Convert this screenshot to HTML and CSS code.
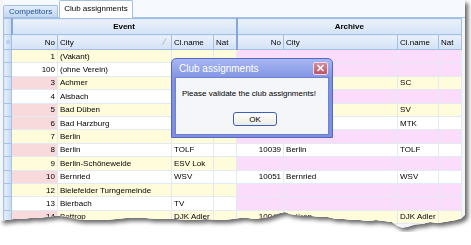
FILE: index.html
```html
<!DOCTYPE html>
<html>
  <head>
    <meta charset="utf-8">
    <title>Club assignments</title>
    <link rel="stylesheet" href="styles.css">
  </head>
  <body>
    <div class="shot">
      <div class="paper">
        <div class="tabs">
          <div class="tab">Competitors</div>
          <div class="tab active">Club assignments</div>
        </div>
        <table class="grid">
          <colgroup>
            <col class="c-ind"><col class="c-no"><col class="c-city"><col class="c-cl"><col class="c-nat">
            <col class="c-no2"><col class="c-city"><col class="c-cl2"><col class="c-nat">
          </colgroup>
          <thead>
            <tr class="band">
              <th class="ind"></th>
              <th colspan="4" class="group">Event</th>
              <th colspan="4" class="group">Archive</th>
            </tr>
            <tr class="cols">
              <th class="ind"><span class="dot"></span></th>
              <th class="num">No</th>
              <th class="sorted">City
                <svg class="sort" width="6" height="8" viewBox="0 0 6 8"><path d="M5 0.5 L1 7.5" stroke="#b4b8c4" fill="none"/><path d="M1 7.5 H5.5" stroke="#e2e6ee" fill="none"/></svg>
              </th>
              <th>Cl.name</th>
              <th class="split">Nat</th>
              <th class="num">No</th>
              <th>City</th>
              <th>Cl.name</th>
              <th>Nat</th>
            </tr>
          </thead>
          <tbody>
            <tr class="odd">
              <td class="ind"></td><td class="num">1</td><td>(Vakant)</td><td></td><td class="split"></td>
              <td class="miss"></td><td class="miss"></td><td class="miss"></td><td class="miss"></td>
            </tr>
            <tr>
              <td class="ind"></td><td class="num">100</td><td>(ohne Verein)</td><td></td><td class="split"></td>
              <td class="miss"></td><td class="miss"></td><td class="miss"></td><td class="miss"></td>
            </tr>
            <tr class="odd">
              <td class="ind"></td><td class="num hit">3</td><td>Achmer</td><td></td><td class="split"></td>
              <td class="num">10003</td><td>Achmer</td><td>SC</td><td></td>
            </tr>
            <tr>
              <td class="ind"></td><td class="num">4</td><td>Alsbach</td><td></td><td class="split"></td>
              <td class="miss"></td><td class="miss"></td><td class="miss"></td><td class="miss"></td>
            </tr>
            <tr class="odd">
              <td class="ind"></td><td class="num hit">5</td><td>Bad Düben</td><td></td><td class="split"></td>
              <td class="num">10005</td><td>Bad Düben</td><td>SV</td><td></td>
            </tr>
            <tr>
              <td class="ind"></td><td class="num hit">6</td><td>Bad Harzburg</td><td></td><td class="split"></td>
              <td class="num">10006</td><td>Harzburg</td><td>MTK</td><td></td>
            </tr>
            <tr class="odd">
              <td class="ind"></td><td class="num">7</td><td>Berlin</td><td></td><td class="split"></td>
              <td class="miss"></td><td class="miss"></td><td class="miss"></td><td class="miss"></td>
            </tr>
            <tr>
              <td class="ind"></td><td class="num hit">8</td><td>Berlin</td><td>TOLF</td><td class="split"></td>
              <td class="num">10039</td><td>Berlin</td><td>TOLF</td><td></td>
            </tr>
            <tr class="odd">
              <td class="ind"></td><td class="num">9</td><td>Berlin-Schöneweide</td><td>ESV Lok</td><td class="split"></td>
              <td class="miss"></td><td class="miss"></td><td class="miss"></td><td class="miss"></td>
            </tr>
            <tr>
              <td class="ind"></td><td class="num hit">10</td><td>Bernried</td><td>WSV</td><td class="split"></td>
              <td class="num">10051</td><td>Bernried</td><td>WSV</td><td></td>
            </tr>
            <tr class="odd">
              <td class="ind"></td><td class="num">12</td><td>Bielefelder Turngemeinde</td><td></td><td class="split"></td>
              <td class="miss"></td><td class="miss"></td><td class="miss"></td><td class="miss"></td>
            </tr>
            <tr>
              <td class="ind"></td><td class="num">13</td><td>Bierbach</td><td>TV</td><td class="split"></td>
              <td class="miss"></td><td class="miss"></td><td class="miss"></td><td class="miss"></td>
            </tr>
            <tr class="odd">
              <td class="ind"></td><td class="num hit">14</td><td>Bottrop</td><td>DJK Adler</td><td class="split"></td>
              <td class="num">10044</td><td>Bottrop</td><td>DJK Adler</td><td></td>
            </tr>
          </tbody>
        </table>
      </div>
    </div>

    <div class="dialog">
      <div class="dialog-title">
        <span>Club assignments</span>
        <span class="close">
          <svg width="9" height="8" viewBox="0 0 9 8"><path d="M1.5 1 L7.5 7 M7.5 1 L1.5 7" stroke="#fff" stroke-width="1.6"/></svg>
        </span>
      </div>
      <div class="dialog-body">
        <p>Please validate the club assignments!</p>
        <button class="ok">OK</button>
      </div>
    </div>
  </body>
</html>
```

FILE: styles.css
```css
* {
  margin: 0;
  box-sizing: border-box;
}

html,
body {
  background: #fff;
  font-family: "Liberation Sans", Arial, sans-serif;
  font-size: 8px;
  color: #000;
}

.shot {
  width: 465px;
  filter: drop-shadow(3px 3px 2px rgba(0, 0, 0, 0.6));
}

.paper {
  height: 232px;
  padding-left: 3px;
  background: #f3f5f8;
  clip-path: polygon(0 0, 465px 0, 465px 215px, 462px 218px, 456px 220px, 450px 221px, 444px 222px, 438px 223px,
    430px 222px, 422px 224px, 414px 225px, 408px 227px, 402px 228px, 397px 226px, 392px 222px, 384px 221px,
    376px 220px, 368px 221px, 360px 220px, 352px 220px, 344px 219px, 336px 219px, 328px 217px, 320px 217px,
    312px 216px, 304px 216px, 296px 215px, 290px 214px, 285px 212px, 280px 213px, 274px 215px, 268px 217px,
    262px 218px, 255px 219px, 248px 218px, 240px 218px, 232px 219px, 224px 220px, 216px 220px, 206px 219px,
    196px 220px, 186px 220px, 176px 219px, 166px 219px, 156px 219px, 146px 218px, 136px 218px, 126px 218px,
    116px 219px, 106px 220px, 96px 220px, 86px 220px, 76px 219px, 68px 217px, 60px 216px, 54px 216px,
    46px 217px, 38px 218px, 30px 218px, 22px 219px, 14px 219px, 6px 220px, 0 221px);
}

/* tabs */
.tabs {
  display: flex;
  align-items: flex-end;
  gap: 1px;
  height: 18px;
  border-bottom: 1px solid #a4bfe2;
  background: #f6f9fd;
}

.tab {
  height: 12px;
  padding: 0 5px;
  line-height: 11px;
  color: #1d4f9a;
  background: linear-gradient(#e4eefa, #c3d7f0);
  border: 1px solid #a4bfe2;
  border-bottom: none;
  border-radius: 2px 2px 0 0;
}

.tab.active {
  height: 18px;
  margin-bottom: -1px;
  padding: 0 4px;
  line-height: 15px;
  color: #000;
  background: #fff;
}

/* grid */
.grid {
  width: 459px;
  border-collapse: collapse;
  table-layout: fixed;
  background: #fff;
}

.c-ind { width: 8px; }
.c-no { width: 46px; }
.c-city { width: 114px; }
.c-cl { width: 42px; }
.c-nat { width: 23px; }
.c-no2 { width: 47px; }
.c-cl2 { width: 41px; }

.grid th,
.grid td {
  padding: 0 2px;
  overflow: hidden;
  white-space: nowrap;
  text-align: left;
  font-weight: normal;
}

.grid th {
  border: 1px solid #a3bfe3;
  background: linear-gradient(#eaf1fb, #d3e2f5);
}

.band {
  height: 16px;
}

.band th.group {
  text-align: center;
  font-weight: bold;
  border-left: 2px solid #86a7d8;
}

.cols {
  height: 15px;
}

.cols th.split {
  border-right: 2px solid #86a7d8;
}

.grid th.num,
.grid td.num {
  text-align: right;
}

.sorted {
  position: relative;
}

.sort {
  position: absolute;
  right: 4px;
  top: 3px;
}

.grid .ind {
  padding: 0;
  border: 1px solid #a3bfe3;
  background: linear-gradient(90deg, #e6effb, #c6d9f1);
}

.dot {
  display: block;
  width: 4px;
  height: 4px;
  margin: 0 auto;
  border-radius: 50%;
  background: #b7cdec;
}

.grid tbody tr {
  height: 13.4px;
}

.grid td {
  border: 1px solid #e3eaf4;
  line-height: 11px;
}

.grid tr.odd td {
  background: #fffcdc;
}

.grid tr td.hit {
  background: #f9dadc;
}

.grid tr td.miss {
  background: #fcdcfb;
}

.grid tr td.ind {
  background: linear-gradient(90deg, #e6effb, #c6d9f1);
  border-color: #a8c2e5;
}

/* dialog */
.dialog {
  position: absolute;
  left: 171px;
  top: 58px;
  width: 162px;
  height: 80px;
  padding: 0 3px 3px;
  border: 1px solid #5468bd;
  border-radius: 5px 5px 0 0;
  background: linear-gradient(#a7b7f2, #8092e2 20px, #7b8ee0);
}

.dialog-title {
  display: flex;
  align-items: center;
  justify-content: space-between;
  height: 18px;
  padding-left: 4px;
  color: #fff;
  font-size: 10px;
}

.close {
  display: flex;
  align-items: center;
  justify-content: center;
  width: 15px;
  height: 13px;
  margin-right: 1px;
  border: 1px solid #eadbe6;
  border-radius: 2px;
  background: linear-gradient(#d98c9c, #be5568);
}

.dialog-body {
  height: 58px;
  padding: 11px 0 0 6px;
  border: 1px solid #6e80cf;
  background: #f5f6fa;
}

.dialog-body p {
  line-height: 10px;
}

.ok {
  display: block;
  width: 44px;
  height: 14px;
  margin: 13px auto 0;
  padding: 0;
  font-family: "Liberation Sans", Arial, sans-serif;
  font-size: 8px;
  color: #000;
  border: 1px solid #3f5fbf;
  border-radius: 3px;
  background: linear-gradient(#ffffff, #ecebe6);
}
```
